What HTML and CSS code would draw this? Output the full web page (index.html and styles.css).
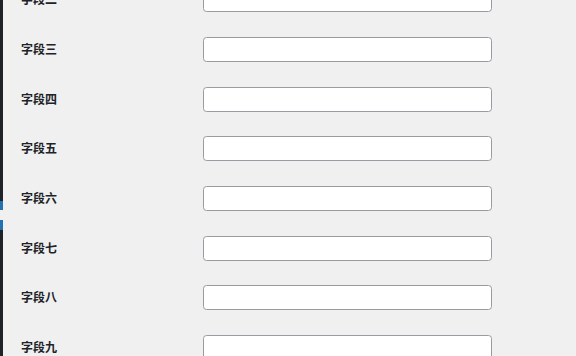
FILE: index.html
```html
<!doctype html>
<html>
<head>
<meta charset="utf-8">
<title>设置</title>
<link rel="stylesheet" href="styles.css">
</head>
<body>
	<div id="adminmenu">
		<div class="menu-top"></div>
		<div class="menu-current"></div>
		<div class="menu-notch"></div>
		<div class="menu-current low"></div>
		<div class="menu-rest"></div>
	</div>

	<div class="wrap">
		<table class="form-table">
			<tr><th>字段二</th><td><input type="text" class="regular-text"></td></tr>
			<tr><th>字段三</th><td><input type="text" class="regular-text"></td></tr>
			<tr><th>字段四</th><td><input type="text" class="regular-text"></td></tr>
			<tr><th>字段五</th><td><input type="text" class="regular-text"></td></tr>
			<tr><th>字段六</th><td><input type="text" class="regular-text"></td></tr>
			<tr><th>字段七</th><td><input type="text" class="regular-text"></td></tr>
			<tr><th>字段八</th><td><input type="text" class="regular-text"></td></tr>
			<tr><th>字段九</th><td><input type="text" class="regular-text"></td></tr>
		</table>
	</div>
</body>
</html>
```

FILE: styles.css
```css
html, body {
	margin: 0;
	height: 100%;
	overflow: hidden;
}

body {
	display: flex;
	background-color: #f0f0f1;
	color: #1d2327;
	font-family: "Noto Sans CJK SC", "Noto Sans", sans-serif;
}

#adminmenu {
	width: 3px;
	flex: none;
	display: flex;
	flex-direction: column;
}
.menu-top {
	height: 201px;
	background: #1d2327;
}
.menu-current {
	height: 9px;
	background: #2271b1;
}
.menu-current.low {
	height: 10px;
}
.menu-notch {
	height: 10px;
	background: #f0f0f1;
}
.menu-rest {
	flex: 1;
	background: #1d2327;
}

.wrap {
	flex: 1;
	margin-top: -25px;
	padding-left: 18px;
}

.form-table {
	border-collapse: collapse;
}
.form-table tr {
	height: 49.67px;
}
.form-table th {
	width: 182px;
	padding: 0 0 2px 0;
	text-align: left;
	font-size: 12px;
	font-weight: 700;
	vertical-align: middle;
}
.form-table td {
	padding: 0;
	vertical-align: middle;
}

.regular-text {
	display: block;
	box-sizing: border-box;
	width: 289px;
	height: 25px;
	margin: 0;
	padding: 0 7px;
	background: #fff;
	border: 1px solid #999ba0;
	border-radius: 3.5px;
	font-size: 12px;
}
```
